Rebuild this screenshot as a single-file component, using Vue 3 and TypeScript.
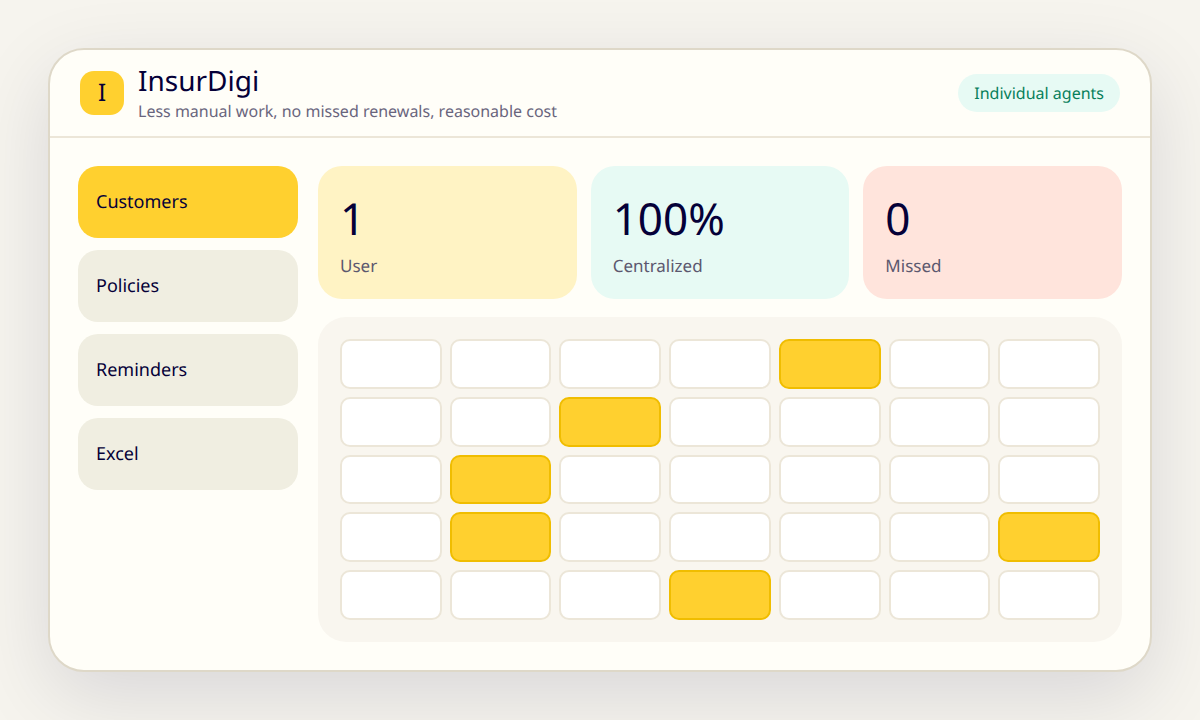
<script setup lang="ts">
import { ref } from 'vue'

interface Stat {
  value: string
  label: string
  tone: string
}

const sections: string[] = ['Customers', 'Policies', 'Reminders', 'Excel']
const active = ref<string>('Customers')

const stats: Stat[] = [
  { value: '1', label: 'User', tone: 'yellow' },
  { value: '100%', label: 'Centralized', tone: 'mint' },
  { value: '0', label: 'Missed', tone: 'coral' },
]

const cellCount = 35
const marked = new Set<number>([5, 10, 16, 23, 28, 32])
</script>

<template>
  <div class="page">
    <main class="window">
      <header class="header">
        <div class="logo">I</div>
        <div class="brand">
          <h1>InsurDigi</h1>
          <p>Less manual work, no missed renewals, reasonable cost</p>
        </div>
        <span class="pill">Individual agents</span>
      </header>
      <div class="body">
        <nav class="sidebar">
          <button
            v-for="section in sections"
            :key="section"
            type="button"
            class="tab"
            :class="{ active: section === active }"
            @click="active = section"
          >
            {{ section }}
          </button>
        </nav>
        <div class="content">
          <section class="stats">
            <article v-for="stat in stats" :key="stat.label" class="stat" :class="stat.tone">
              <strong>{{ stat.value }}</strong>
              <span>{{ stat.label }}</span>
            </article>
          </section>
          <section class="calendar">
            <div v-for="n in cellCount" :key="n" class="cell" :class="{ marked: marked.has(n) }"></div>
          </section>
        </div>
      </div>
    </main>
  </div>
</template>

<style>
body {
  margin: 0;
}
</style>

<style scoped>
.page,
.page * {
  box-sizing: border-box;
}

.page {
  display: flex;
  min-height: 100vh;
  padding: 48px;
  background: #f6f4ee;
  color: #050038;
  font-family: "Noto Sans", sans-serif;
  text-rendering: geometricPrecision;
}

.window {
  display: flex;
  flex: 1;
  flex-direction: column;
  min-width: 0;
  border: 2px solid #ded8c8;
  border-radius: 36px;
  background: #fffef8;
  box-shadow: 0 24px 80px rgba(5, 0, 56, 0.12);
}

.header {
  display: flex;
  align-items: center;
  gap: 14px;
  padding: 12px 30px;
  border-bottom: 2px solid #ece6d8;
}

.logo {
  display: grid;
  place-items: center;
  width: 44px;
  height: 44px;
  border-radius: 14px;
  background: #ffd02f;
  font-size: 24px;
  line-height: 34px;
}

.brand {
  flex: 1;
  padding-bottom: 2px;
}

h1,
p {
  margin: 0;
  font-weight: 400;
}

h1 {
  font-size: 28px;
  line-height: 38px;
}

.brand p {
  color: #69657d;
  font-size: 16px;
  line-height: 22px;
}

.pill {
  padding: 8px 16px;
  border-radius: 20px;
  background: #e7faf4;
  color: #087f5b;
  font-size: 16px;
  line-height: 22px;
}

.body {
  display: grid;
  flex: 1;
  grid-template-columns: 220px 1fr;
  gap: 20px;
  padding: 28px;
}

.sidebar {
  display: flex;
  flex-direction: column;
  gap: 12px;
}

.tab {
  height: 72px;
  padding: 0 18px;
  border: 0;
  border-radius: 20px;
  background: #f0eee1;
  color: inherit;
  font: inherit;
  font-size: 18px;
  line-height: 24px;
  text-align: left;
  text-rendering: inherit;
  cursor: pointer;
}

.tab.active {
  background: #ffd02f;
}

.content {
  display: flex;
  flex-direction: column;
  gap: 18px;
  min-width: 0;
}

.stats {
  display: grid;
  grid-template-columns: repeat(3, 1fr);
  gap: 14px;
}

.stat {
  display: flex;
  flex-direction: column;
  gap: 6px;
  padding: 22px;
  border-radius: 24px;
}

.stat strong {
  font-size: 44px;
  font-weight: 400;
  line-height: 60px;
}

.stat span {
  color: #5c586f;
  font-size: 17px;
  line-height: 23px;
}

.yellow {
  background: #fff3c4;
}

.mint {
  background: #e7faf4;
}

.coral {
  background: #ffe4dc;
}

.calendar {
  display: grid;
  flex: 1;
  grid-template-columns: repeat(7, 1fr);
  grid-template-rows: repeat(5, minmax(32px, 1fr));
  gap: 8px;
  padding: 22px;
  border-radius: 28px;
  background: #f9f6ef;
}

.cell {
  border: 2px solid #ece6d8;
  border-radius: 10px;
  background: #fff;
}

.cell.marked {
  border-color: #f0bd00;
  background: #ffd02f;
}
</style>
